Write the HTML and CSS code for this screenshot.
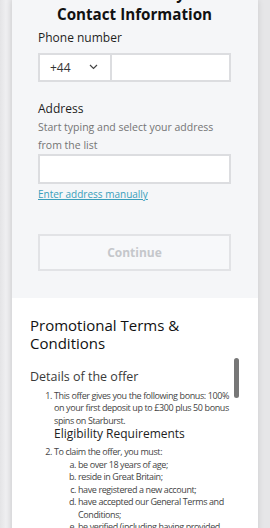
FILE: index.html
```html
<!DOCTYPE html>
<html>
<head>
<meta charset="utf-8">
<link rel="stylesheet" href="styles.css">
</head>
<body>
<div class="card">
  <section class="form">
    <h1 class="title title-prev">Almost ready</h1>
    <h1 class="title">Contact Information</h1>
    <label class="label">Phone number</label>
    <div class="phone">
      <div class="country"><span>+44</span>
        <svg class="chev" width="9" height="6" viewBox="0 0 9 6"><path d="M1 1l3.5 3.5L8 1" fill="none" stroke="#444" stroke-width="1.2"/></svg>
      </div>
      <div class="number"></div>
    </div>
    <label class="label addr-label">Address</label>
    <p class="hint">Start typing and select your address from the list</p>
    <div class="input"></div>
    <a class="manual" href="#">Enter address manually</a>
    <button class="continue">Continue</button>
  </section>
  <section class="terms">
    <h2 class="terms-title">Promotional Terms &amp; Conditions</h2>
    <div class="scroll">
      <h3 class="sub">Details of the offer</h3>
      <ol class="list">
        <li>This offer gives you the following bonus: 100% on your first deposit up to £300 plus 50 bonus spins on Starburst.
          <h4 class="sub2">Eligibility Requirements</h4>
        </li>
        <li>To claim the offer, you must:
          <ol class="alpha">
            <li>be over 18 years of age;</li>
            <li>reside in Great Britain;</li>
            <li>have registered a new account;</li>
            <li>have accepted our General Terms and Conditions;</li>
            <li>be verified (including having provided</li>
          </ol>
        </li>
      </ol>
      <div class="thumb"></div>
    </div>
  </section>
</div>
</body>
</html>
```
FILE: styles.css
```css
html, body {
  margin: 0;
  padding: 0;
  height: 100%;
  overflow: hidden;
}
body {
  background: linear-gradient(90deg, #e4e4e6 0, #efeff1 6px, #e6e6e8 12px);
  font-family: "Open Sans", sans-serif;
  color: #1e1e1e;
}
.card {
  margin: 0 12px;
  background: #fff;
  box-shadow: 0 0 6px rgba(0,0,0,0.12);
  min-height: 600px;
}
.form {
  background: #f5f6f8;
  padding: 0 27px 27px 26px;
  display: flex;
  flex-direction: column;
}
.title {
  margin: 0;
  font-size: 15.2px;
  line-height: 21px;
  font-weight: 700;
  text-align: center;
  color: #111;
}
.title-prev {
  margin-top: -17.5px;
}
.label {
  display: block;
  font-size: 12px;
  line-height: 18px;
  margin-top: 4px;
  color: #1e1e1e;
}
.phone {
  display: flex;
  margin-top: 6px;
  height: 29px;
  box-sizing: border-box;
  border: 2px solid #dcdde0;
  background: #fff;
}
.country {
  width: 72px;
  display: flex;
  align-items: center;
  justify-content: space-between;
  padding: 0 12px 0 10px;
  box-sizing: border-box;
  border-right: 2px solid #dcdde0;
  font-size: 12px;
  color: #333;
}
.number {
  flex: 1;
}
.addr-label {
  margin-top: 18.5px;
}
.hint {
  margin: 0;
  font-size: 10.5px;
  line-height: 18px;
  color: #747474;
}
.input {
  height: 30px;
  box-sizing: border-box;
  border: 2px solid #dcdde0;
  background: #fff;
}
.manual {
  margin-top: 3px;
  font-size: 10px;
  line-height: 14px;
  color: #3a9fbb;
  text-decoration: underline;
  align-self: flex-start;
}
.continue {
  margin-top: 33px;
  height: 37px;
  box-sizing: border-box;
  border: 2px solid #e2e3e6;
  background: #f7f8fa;
  font-family: "Open Sans", sans-serif;
  font-weight: 700;
  font-size: 12px;
  color: #c5c7cb;
}
.terms {
  padding: 18px 18px 0 18px;
}
.terms-title {
  margin: 0;
  font-size: 15px;
  line-height: 18px;
  font-weight: 400;
  color: #111;
}
.scroll {
  position: relative;
  margin-top: 16px;
}
.sub {
  margin: 0;
  font-size: 12.5px;
  line-height: 18px;
  font-weight: 400;
  color: #3a3a3a;
}
.list {
  margin: 3.5px 0 0;
  padding-left: 24px;
  padding-right: 8px;
  font-size: 9px;
  letter-spacing: -0.4px;
  line-height: 12.5px;
  color: #444;
}
.sub2 {
  margin: 0 0 5px;
  font-size: 12px;
  line-height: 14px;
  font-weight: 400;
  letter-spacing: 0;
  color: #222;
}
.alpha {
  list-style-type: lower-alpha;
  margin: 0;
  padding-left: 24px;
}
.thumb {
  position: absolute;
  top: -10px;
  right: 1px;
  width: 5px;
  height: 40px;
  border-radius: 3px;
  background: #777;
}
```
